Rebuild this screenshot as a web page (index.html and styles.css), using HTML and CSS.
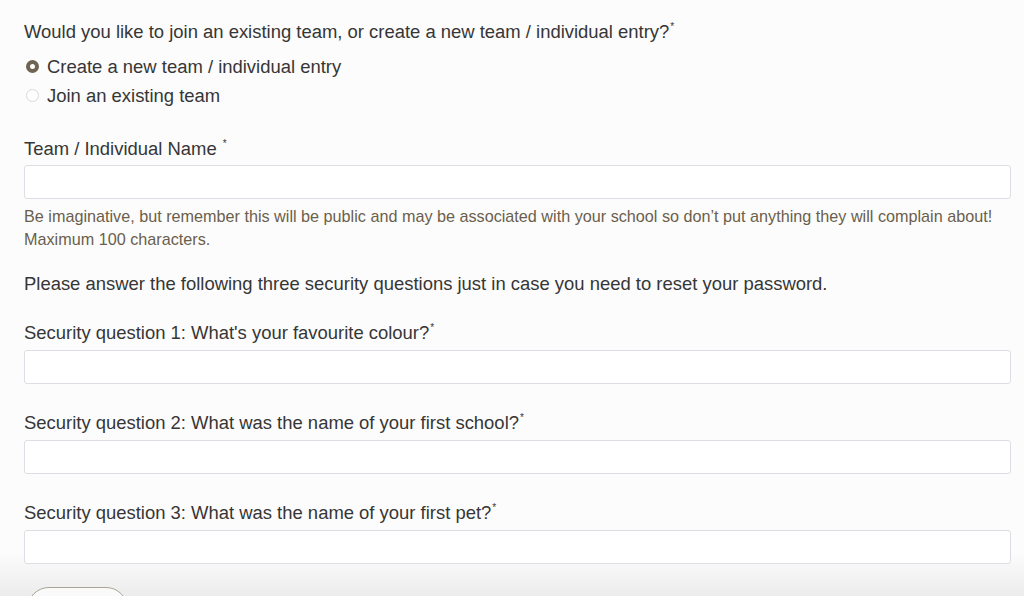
FILE: index.html
```html
<!DOCTYPE html>
<html lang="en">
<head>
  <meta charset="UTF-8">
  <title>Team Registration</title>
  <link rel="stylesheet" href="styles.css">
</head>
<body>

  <form class="signup">
    <p class="question">Would you like to join an existing team, or create a new team / individual entry?<sup>*</sup></p>

    <div class="choices">
      <label class="choice">
        <input type="radio" name="entry" value="new" checked>
        Create a new team / individual entry
      </label>
      <label class="choice">
        <input type="radio" name="entry" value="join">
        Join an existing team
      </label>
    </div>

    <div class="field team-field">
      <label for="teamName">Team / Individual Name <sup>*</sup></label>
      <input id="teamName" type="text" maxlength="100">
      <p class="help">Be imaginative, but remember this will be public and may be associated with your school so don’t put anything they will complain about!<br>Maximum 100 characters.</p>
    </div>

    <p class="intro">Please answer the following three security questions just in case you need to reset your password.</p>

    <div class="field">
      <label for="sq1">Security question 1: What's your favourite colour?<sup>*</sup></label>
      <input id="sq1" type="text">
    </div>

    <div class="field">
      <label for="sq2">Security question 2: What was the name of your first school?<sup>*</sup></label>
      <input id="sq2" type="text">
    </div>

    <div class="field">
      <label for="sq3">Security question 3: What was the name of your first pet?<sup>*</sup></label>
      <input id="sq3" type="text">
    </div>

    <button type="submit" aria-label="Submit"></button>
  </form>

</body>
</html>
```

FILE: styles.css
```css
* {
  box-sizing: border-box;
}

html {
  background: linear-gradient(#fcfcfc 552px, #ececec 596px) #ececec;
  overflow: hidden;
}

body {
  font-family: "Liberation Sans", Arial, sans-serif;
  font-size: 18.45px;
  color: #363636;
  margin: 0;
  padding: 21px 13px 0 24px;
  height: 596px;
  overflow: hidden;
}

p {
  margin: 0;
}

sup {
  font-size: 10px;
  line-height: 0;
  vertical-align: 8px;
  margin-left: 1px;
}

.question,
.intro {
  line-height: 22px;
}

.choices {
  margin-top: 9px;
}

.choice {
  display: flex;
  align-items: center;
  height: 29px;
  line-height: 29px;
}

.choice input {
  appearance: none;
  -webkit-appearance: none;
  width: 13px;
  height: 13px;
  margin: 0 8px 0 2px;
  border: 1px solid #d8d8d8;
  border-radius: 50%;
  background-color: #fff;
}

.choice input:checked {
  border: 4px solid #6e6451;
}

.field {
  margin-bottom: 28px;
}

.field label {
  display: block;
  line-height: 22px;
  margin-bottom: 6px;
}

.field input {
  display: block;
  width: 100%;
  height: 34px;
  padding: 6px 10px;
  border: 1px solid #dcdee3;
  border-radius: 3px;
  background-color: #fff;
  font-family: inherit;
  font-size: 16px;
}

.team-field {
  margin-top: 28px;
  margin-bottom: 0;
}

.team-field label {
  margin-bottom: 5px;
}

.help {
  margin-top: 6px;
  font-size: 16.2px;
  line-height: 23px;
  color: #6b5f4c;
}

.intro {
  margin: 22px 0 27px;
}

button {
  display: block;
  margin: -5px 0 0 3px;
  width: 101px;
  height: 44px;
  border: 1px solid #a9a594;
  border-radius: 22px;
  background-color: #fafafa;
  cursor: pointer;
}
```
